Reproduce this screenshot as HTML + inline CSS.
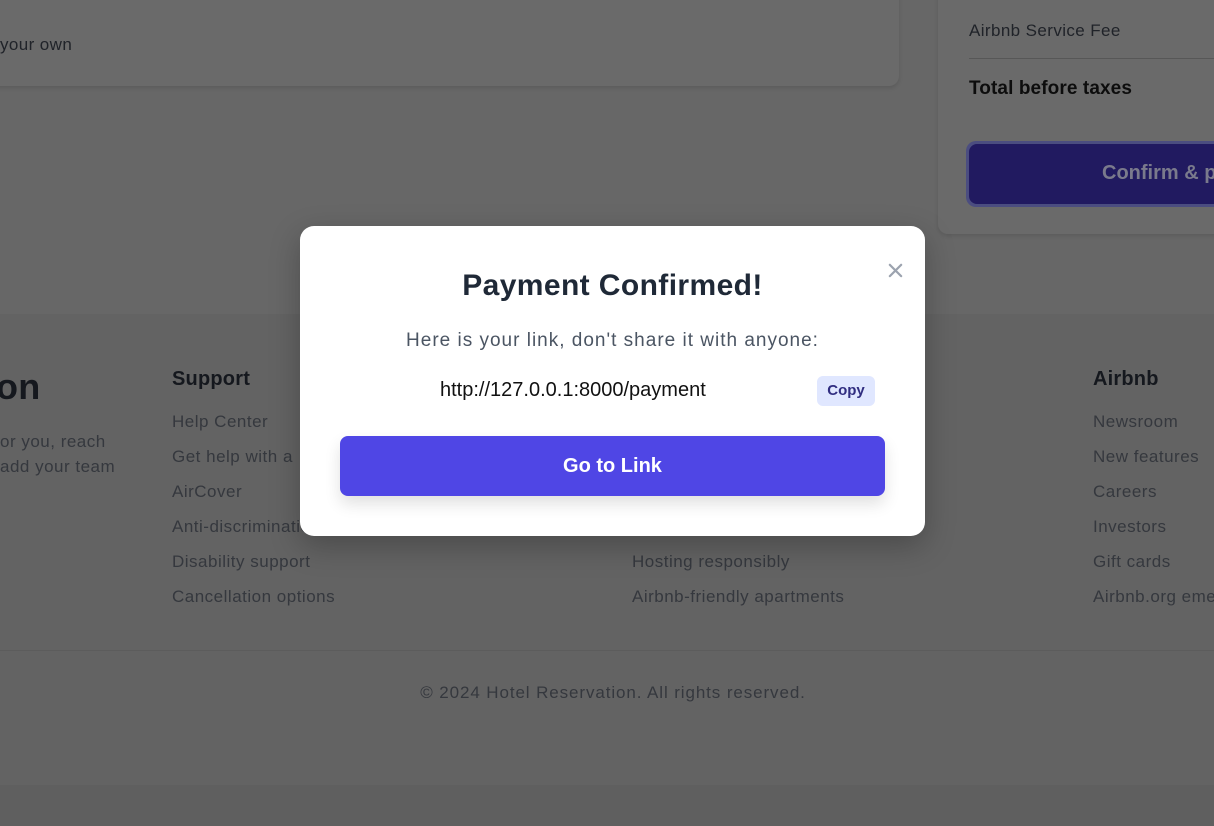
<!DOCTYPE html>
<html><head><meta charset="utf-8"><style>
*{margin:0;padding:0;box-sizing:border-box}
body{width:1214px;height:826px;overflow:hidden;background:#676767;font-family:"Liberation Sans",sans-serif;position:relative}
.abs{position:absolute;white-space:nowrap}
.card{position:absolute;left:-20px;top:-20px;width:919px;height:106px;background:#6a6a6a;border-radius:10px;box-shadow:0 2px 4px rgba(0,0,0,.12)}
.side{position:absolute;left:938px;top:-20px;width:300px;height:254px;background:#6a6a6a;border-radius:10px;box-shadow:0 2px 4px rgba(0,0,0,.12)}
.footer{position:absolute;left:0;top:314px;width:1214px;height:471px;background:#636363}
.bottom{position:absolute;left:0;top:785px;width:1214px;height:41px;background:#5f5f5f}
.ft{color:#35383e;font-size:17px;letter-spacing:.5px}
.fh{color:#15181e;font-size:20px;font-weight:bold;letter-spacing:.2px}
.modal{position:absolute;left:300px;top:226px;width:625px;height:310px;background:#fff;border-radius:14px;box-shadow:0 10px 30px rgba(0,0,0,.25)}
</style></head><body>
<div class="card"></div>
<div class="abs" style="left:0;top:35px;font-size:17px;color:#202329;letter-spacing:.4px">your own</div>
<div class="side"></div>
<div class="abs" style="left:969px;top:21px;font-size:17px;color:#202329;letter-spacing:.4px">Airbnb Service Fee</div>
<div class="abs" style="left:969px;top:58px;width:260px;height:1px;background:#575757"></div>
<div class="abs" style="left:969px;top:78px;font-size:19px;font-weight:bold;color:#0d0d0d;letter-spacing:.1px">Total before taxes</div>
<div class="abs" style="left:966px;top:141px;width:260px;height:66px;border-radius:10px;background:#4b4d80"></div>
<div class="abs" style="left:969px;top:144px;width:260px;height:60px;border-radius:8px;background:#211a60;color:#7a7a8c;font-size:20px;font-weight:bold;padding:18px 0 0 133px">Confirm &amp; pay</div>
<div class="footer"></div>
<div class="abs" style="left:0;top:650px;width:1214px;height:1px;background:#5c5c5c"></div>
<div class="abs fh" style="left:-4px;top:366px;font-size:36px">on</div>
<div class="abs ft" style="left:0;top:432px">or you, reach</div>
<div class="abs ft" style="left:0;top:457px">add your team</div>
<div class="abs fh" style="left:172px;top:368px">Support</div>
<div class="abs ft" style="left:172px;top:412px">Help Center</div>
<div class="abs ft" style="left:172px;top:447px">Get help with a</div>
<div class="abs ft" style="left:172px;top:482px">AirCover</div>
<div class="abs ft" style="left:172px;top:517px">Anti-discrimination</div>
<div class="abs ft" style="left:172px;top:552px">Disability support</div>
<div class="abs ft" style="left:172px;top:587px">Cancellation options</div>
<div class="abs ft" style="left:632px;top:552px">Hosting responsibly</div>
<div class="abs ft" style="left:632px;top:587px">Airbnb-friendly apartments</div>
<div class="abs fh" style="left:1093px;top:368px">Airbnb</div>
<div class="abs ft" style="left:1093px;top:412px">Newsroom</div>
<div class="abs ft" style="left:1093px;top:447px">New features</div>
<div class="abs ft" style="left:1093px;top:482px">Careers</div>
<div class="abs ft" style="left:1093px;top:517px">Investors</div>
<div class="abs ft" style="left:1093px;top:552px">Gift cards</div>
<div class="abs ft" style="left:1093px;top:587px">Airbnb.org emergency</div>
<div class="abs ft" style="left:0;top:683px;width:1226px;text-align:center;letter-spacing:.9px">© 2024 Hotel Reservation. All rights reserved.</div>
<div class="bottom"></div>
<div class="modal">
 <div class="abs" style="left:0;width:625px;top:43px;text-align:center;font-size:30px;font-weight:bold;color:#1f2937;letter-spacing:.4px">Payment Confirmed!</div>
 <svg class="abs" style="left:588px;top:37px" width="15" height="15" viewBox="0 0 16 16"><path d="M2 2L14 14M14 2L2 14" stroke="#9ca3af" stroke-width="2.4" stroke-linecap="round"/></svg>
 <div class="abs" style="left:0;width:625px;top:104px;text-align:center;font-size:19px;color:#4b5563;letter-spacing:1px">Here is your link, don't share it with anyone:</div>
 <div class="abs" style="left:140px;top:153px;width:266px;overflow:hidden;font-size:20px;color:#111">http://127.0.0.1:8000/payment/</div>
 <div class="abs" style="left:517px;top:150px;width:58px;height:30px;border-radius:6px;background:#e0e7ff;color:#312e81;font-size:15px;font-weight:bold;text-align:center;line-height:30px">Copy</div>
 <div class="abs" style="left:40px;top:210px;width:545px;height:60px;border-radius:8px;background:#4f46e5;color:#fff;font-size:20px;font-weight:bold;text-align:center;line-height:60px;box-shadow:0 8px 16px rgba(0,0,0,.12)">Go to Link</div>
</div>
</body></html>
